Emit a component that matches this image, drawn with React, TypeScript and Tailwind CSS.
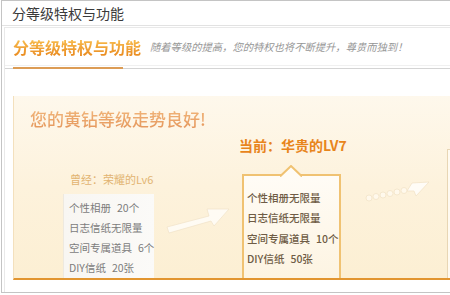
import React from 'react';

/* ---------------- Data ---------------- */
const pastPerks = [
  { name: '个性相册', value: '20个' },
  { name: '日志信纸无限量', value: '' },
  { name: '空间专属道具', value: '6个' },
  { name: 'DIY信纸', value: '20张' },
];

const currentPerks = [
  { name: '个性相册无限量', value: '' },
  { name: '日志信纸无限量', value: '' },
  { name: '空间专属道具', value: '10个' },
  { name: 'DIY信纸', value: '50张' },
];

const font = "font-['Microsoft_YaHei','Noto_Sans_CJK_SC','Noto_Sans',sans-serif]";

/* ---------------- Arrows ---------------- */
const PlainArrow = () => (
  <svg width="66" height="36" viewBox="0 0 66 36" className="block">
    <polygon
      points="2,29 44,18 42,11 64,11 49,28 46,23 4,35"
      fill="#ffffff"
      fillOpacity="0.7"
      stroke="#f1e3c9"
      strokeWidth="0.7"
      strokeLinejoin="round"
    />
  </svg>
);

const DottedArrow = () => (
  <svg width="66" height="22" viewBox="0 0 66 22" className="block">
    {[4, 11, 18, 25, 32, 39].map((cx, i) => (
      <circle key={i} cx={cx} cy={18 - i * 1.5} r="3" fill="#fffaf0" fillOpacity="0.8" stroke="#f0e1c4" strokeWidth="0.7" />
    ))}
    <polygon
      points="42,11 47,3 64,2 51,16 49,11"
      fill="#ffffff"
      fillOpacity="0.75"
      stroke="#f0e1c4"
      strokeWidth="0.7"
      strokeLinejoin="round"
    />
  </svg>
);

export default function App() {
  return (
    <div className={`w-[450px] h-[295px] bg-white overflow-hidden ${font}`}>
      <div className="ml-[1px] h-[293px] border-l border-t border-b border-[#c4c4c4] overflow-hidden">
        {/* Title bar */}
        <div className="h-[25px] border-b border-[#e2e2e2] pl-[10px] text-[14px] leading-[24px] text-[#3a3a3a]">
          分等级特权与功能
        </div>

        <div className="ml-[2px] mt-[1px] border-l border-t border-[#e9e9e9] h-[300px]">
          {/* Section header */}
          <div className="relative border-b border-[#d4d4d4]">
            <div className="h-[38px] border-b border-[#f0f0f0] flex items-center pl-[8px] whitespace-nowrap">
              <span className="text-[16px] font-bold leading-[20px] bg-gradient-to-b from-[#f9c452] to-[#e8871a] bg-clip-text text-transparent">
                分等级特权与功能
              </span>
              <span className="ml-[9px] text-[10.3px] italic text-[#969696] leading-[14px]">
                随着等级的提高，您的特权也将不断提升，尊贵而独到！
              </span>
            </div>
            <div className="h-[2px]" />
            <div className="absolute left-[8px] bottom-[-1px] w-[110px] h-[2px] bg-[#dc9c55]" />
          </div>

          {/* Body */}
          <div className="pt-[27px] pl-[8px]">
            <div className="h-[184px] flex flex-col border-l border-[#f3e0bd] border-b-2 border-b-[#e2952f] bg-gradient-to-b from-[#fef8ec] via-[#fdf2dc] to-[#fcefd3]">
              <div className="pt-[13px] pl-[16px] text-[17px] font-medium leading-[20px] whitespace-nowrap">
                <span className="bg-gradient-to-b from-[#f3bb80] to-[#e39358] bg-clip-text text-transparent">
                  您的黄钻等级走势良好!
                </span>
              </div>

              <div className="flex-1 flex items-end">
                {/* Past level */}
                <div className="ml-[49px] w-[91px] shrink-0">
                  <div className="pl-[7px] mb-[8px] text-[11px] leading-[14px] text-[#e2b471] whitespace-nowrap">
                    曾经：荣耀的Lv6
                  </div>
                  <div className="h-[84px] pt-[4px] pl-[5px] border-l border-[#eee9df] bg-gradient-to-r from-[#f8f6f2] to-[#fbfaf8]">
                    {pastPerks.map((p) => (
                      <div key={p.name} className="text-[10.5px] leading-[20px] text-[#7c7c7c] whitespace-nowrap">
                        {p.name}
                        {p.value && <span className="ml-[6px]">{p.value}</span>}
                      </div>
                    ))}
                  </div>
                </div>

                <div className="w-[88px] shrink-0 self-end mb-[44px] pl-[11px]">
                  <PlainArrow />
                </div>

                {/* Current level */}
                <div className="w-[99px] shrink-0">
                  <div className="-ml-[3px] mb-[20px] text-[14px] font-bold leading-[17px] text-[#e8851c] whitespace-nowrap">
                    当前：华贵的LV7
                  </div>
                  <div className="relative h-[104px] pt-[12px] pl-[3px] border-2 border-b-0 border-[#f0c272] bg-gradient-to-b from-[#fffcf6] to-[#fdf4e2]">
                    <svg
                      width="22"
                      height="12"
                      viewBox="0 0 22 12"
                      className="absolute -top-[11px] left-[36px]"
                    >
                      <polygon points="0,12 11,1 22,12" fill="#fffcf6" />
                      <polyline points="0,11.5 11,1 22,11.5" fill="none" stroke="#f0c272" strokeWidth="2" />
                    </svg>
                    {currentPerks.map((p) => (
                      <div
                        key={p.name}
                        className="text-[10.5px] font-medium leading-[20.3px] text-[#6f5c45] whitespace-nowrap"
                      >
                        {p.name}
                        {p.value && <span className="ml-[6px]">{p.value}</span>}
                      </div>
                    ))}
                  </div>
                </div>

                <div className="w-[106px] shrink-0 self-end mb-[76px] pl-[24px]">
                  <DottedArrow />
                </div>

                {/* Next level (cut off) */}
                <div className="w-[20px] h-[129px] shrink-0 border-l border-t border-[#e8d6b4] bg-[#fffaf0]" />
              </div>
            </div>
          </div>
        </div>
      </div>
    </div>
  );
}
